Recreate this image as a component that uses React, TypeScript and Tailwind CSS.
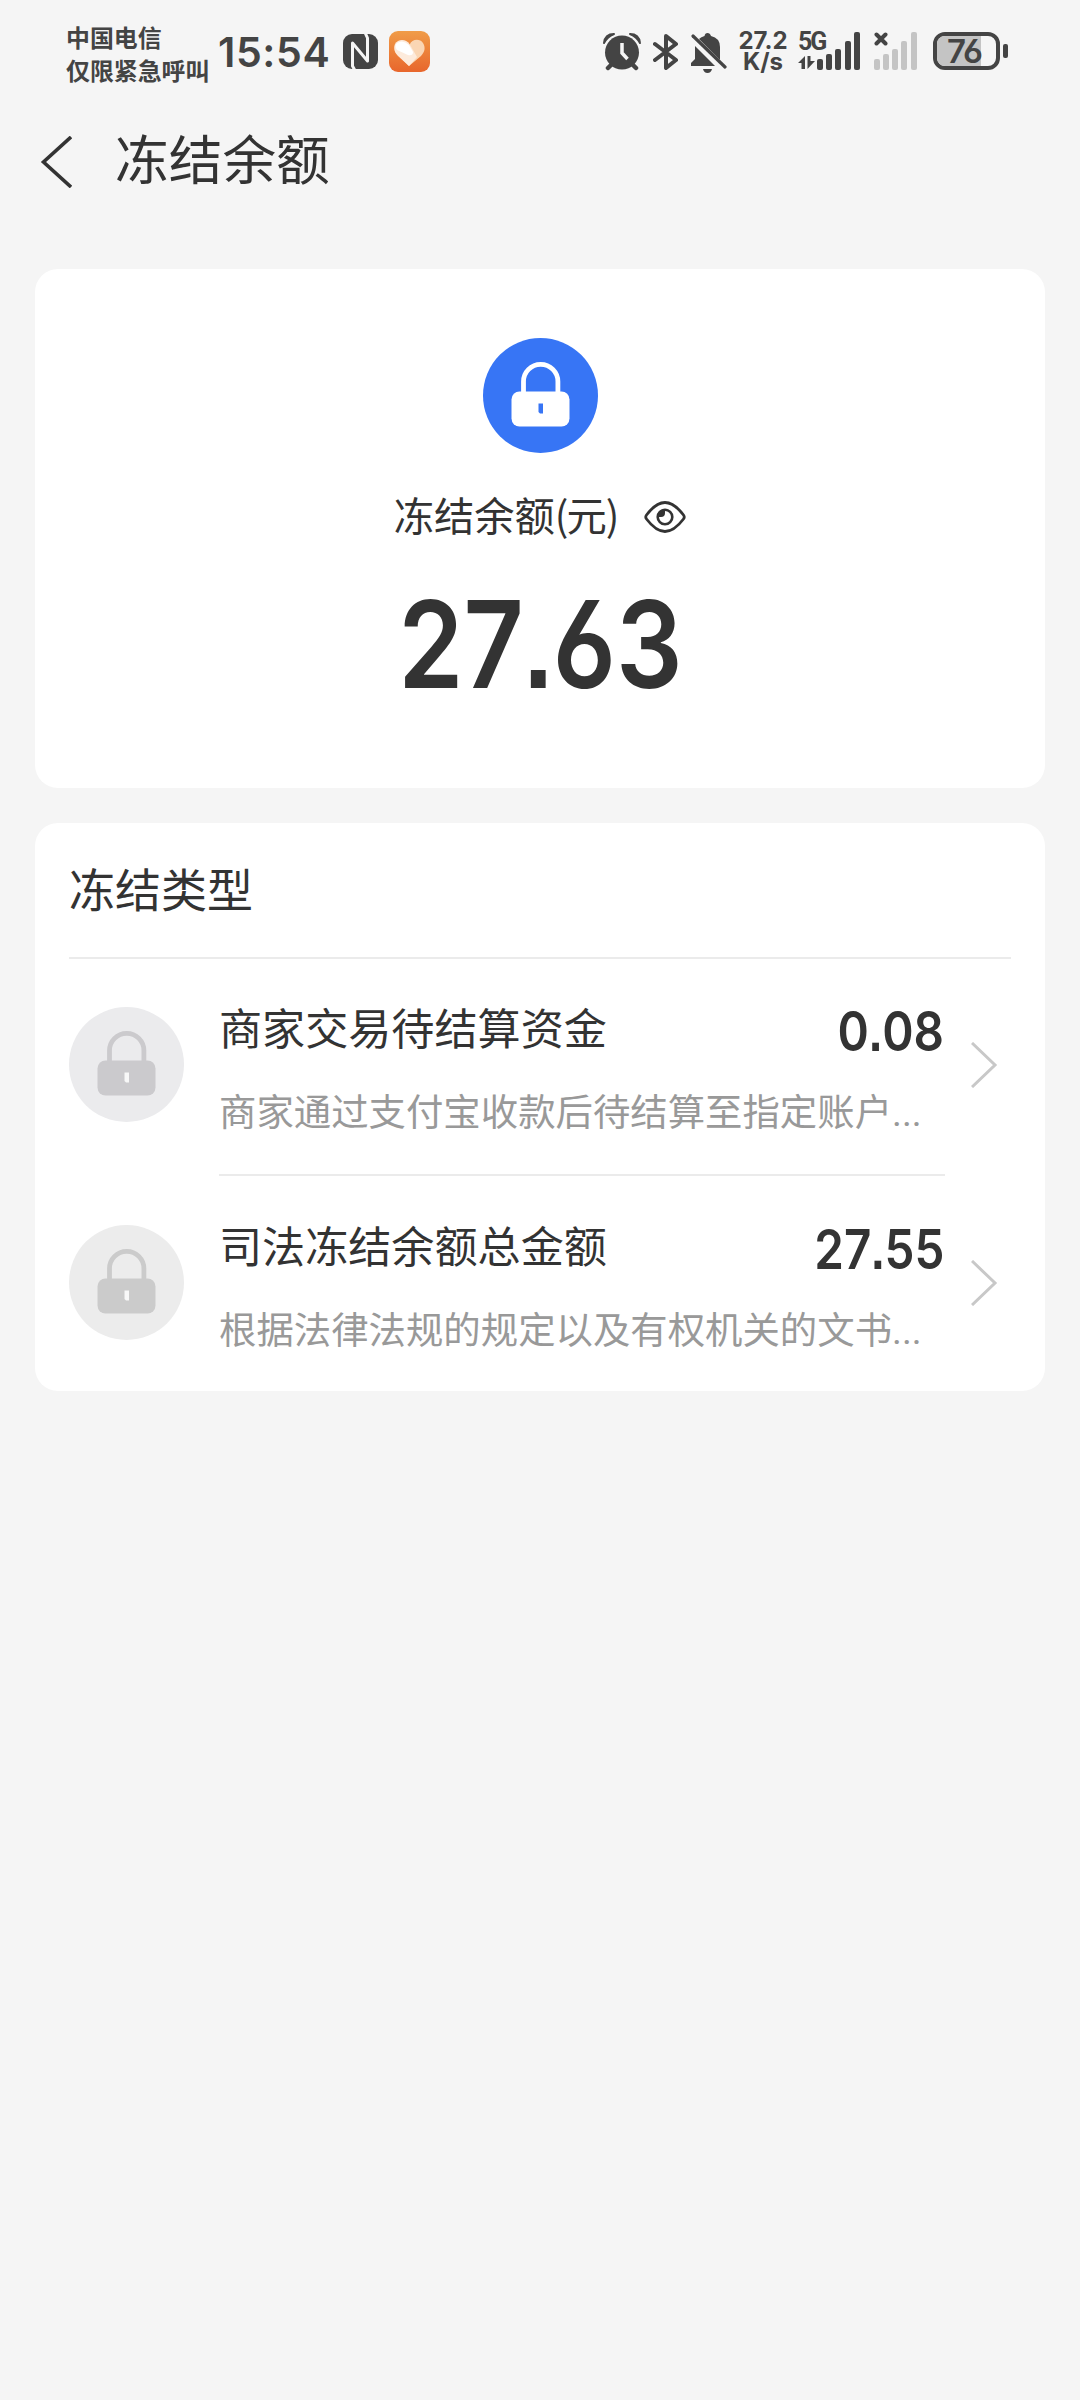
import { clsx } from "clsx";

const BARS = [11, 16, 21, 29, 38];

const Signal = ({ dim }: { dim?: boolean }) => (
  <div className="flex h-[38px] items-end gap-[3.2px]">
    {BARS.map((height) => (
      <span
        className={clsx("w-[6px] rounded-[2px]", dim ? "bg-[#c4c4c4]" : "bg-[#444]")}
        key={height}
        style={{ height }}
      />
    ))}
  </div>
);

const NfcIcon = () => (
  <svg className="h-[35px] w-[35px]" fill="none" viewBox="0 0 35 35">
    <rect fill="#444" height="35" rx="9" width="35" />
    <path d="M12 36.500L9.500 32V9L24.500 27V4L22 -1.500" stroke="#f5f5f5" strokeLinejoin="round" strokeWidth="3" />
  </svg>
);

const HeartIcon = () => (
  <svg className="h-[41px] w-[41px]" viewBox="0 0 41 41">
    <defs>
      <linearGradient id="heart" x1="0" x2="0" y1="0" y2="1">
        <stop offset="0" stopColor="#f09c48" />
        <stop offset="1" stopColor="#e8662c" />
      </linearGradient>
    </defs>
    <rect fill="url(#heart)" height="41" rx="9" width="41" />
    <path d="M20.500 14C23 7.500 31 7.500 34 12C37 17 35.500 21 32 25L20 35L14 29Z" fill="#fad6b4" />
    <path d="M20.500 13C17 7.500 9 7.500 6 13C4 18 6 22 9 25L20 35L28 26Z" fill="#fdebdc" />
    <path d="M8 12Q14 8 20 14L24 21Q24 25 19 24L8 19Q5 15 8 12Z" fill="#fff" />
  </svg>
);

const AlarmIcon = () => (
  <svg className="h-[38px] w-[38px]" fill="none" viewBox="0 0 38 38">
    <path d="M9 31L5 35M29 31L33 35" stroke="#444" strokeLinecap="round" strokeWidth="4.500" />
    <circle cx="19" cy="19.500" fill="#444" r="17" />
    <path d="M1 10Q2 1 11 1Q4 4 1 10ZM37 10Q36 1 27 1Q34 4 37 10Z" fill="#444" stroke="#444" strokeLinejoin="round" strokeWidth="2" />
    <path d="M19 10V20L24.500 26" stroke="#f5f5f5" strokeWidth="3.500" />
  </svg>
);

const BluetoothIcon = () => (
  <svg className="h-[38px] w-[26px]" fill="none" viewBox="0 0 26 38">
    <path d="M2 11L23 27L13 35V3L23 11L2 27" stroke="#444" strokeLinecap="round" strokeLinejoin="round" strokeWidth="4" />
  </svg>
);

const MuteIcon = () => (
  <svg className="h-[40px] w-[36px]" viewBox="0 0 36 40">
    <path d="M12 36H21Q20 40 16.500 40Q13 40 12 36Z" fill="#444" />
    <path d="M4 13L24 33H0V30L4 26Z" fill="#444" />
    <path d="M8 6Q10 4 13.500 3Q14 0 16.500 0Q19 0 20 3Q29 5 29 14V27Z" fill="#444" />
    <path d="M2 3L34 34" stroke="#444" strokeLinecap="round" strokeWidth="3.200" />
  </svg>
);

const StatusBar = () => (
  <div className="flex h-[100px] items-start pl-[66px] text-[#444]">
    <div className="w-[148px] whitespace-nowrap pt-[20px] font-bold text-[23.900px] leading-[33px]">
      <div>中国电信</div>
      <div>仅限紧急呼叫</div>
    </div>
    <div className="mt-[27px] ml-[4px] w-[125px] font-['Inter'] font-semibold text-[41px] leading-[50px] tracking-[0.600px]">
      15:54
    </div>
    <div className="mt-[34px]">
      <NfcIcon />
    </div>
    <div className="mt-[31px] ml-[11px]">
      <HeartIcon />
    </div>
    <div className="mt-[33px] ml-[173px] flex">
      <AlarmIcon />
      <div className="ml-[12px]">
        <BluetoothIcon />
      </div>
      <div className="ml-[12px]">
        <MuteIcon />
      </div>
    </div>
    <div className="mt-[30px] ml-[10px] w-[52px] text-center font-['Inter'] font-bold text-[24px] leading-[21px]">
      <div>27.2</div>
      <div>K/s</div>
    </div>
    <div className="mt-[32px] ml-[9px] w-[19px]">
      <div className="font-['Roboto'] font-bold text-[25px] leading-[19px] tracking-[-2px]">5G</div>
      <svg className="mt-[5px] h-[13px] w-[17px]" viewBox="0 0 17 13">
        <path d="M0 7L7 0V13H3.500V7ZM9.500 0H12.500V5H17L9.500 13Z" fill="#444" />
      </svg>
    </div>
    <div className="mt-[32px]">
      <Signal />
    </div>
    <div className="relative mt-[32px] ml-[14px]">
      <Signal dim />
      <svg className="absolute top-0 left-0 h-[14px] w-[14px]" viewBox="0 0 14 14">
        <path d="M2.500 2.500L11.500 11.500M11.500 2.500L2.500 11.500" stroke="#444" strokeLinecap="round" strokeWidth="4" />
      </svg>
    </div>
    <div className="mt-[32px] ml-[16px] flex items-center gap-[3px]">
      <div className="relative h-[38px] w-[67px] overflow-hidden rounded-[12px] border-4 border-[#444]">
        <div className="h-full w-[44px] bg-[#c4c4c4]" />
        <div className="absolute inset-0 pr-[3px] text-center font-['Inter'] font-semibold text-[33px] leading-[31px] tracking-[-1px] [font-feature-settings:'cv03']">
          76
        </div>
      </div>
      <div className="h-[14px] w-[5px] rounded-[2px] bg-[#444]" />
    </div>
  </div>
);

const Lock = ({ circle, body, hole }: { circle: string; body: string; hole: string }) => (
  <svg className="size-[115px] shrink-0" fill="none" viewBox="0 0 115 115">
    <circle cx="57.500" cy="57.500" fill={circle} r="57.500" />
    <path d="M40.500 56V43.500a17.200 17.200 0 0 1 34.400 0V56" stroke={body} strokeWidth="4.800" />
    <rect fill={body} height="35" rx="8" width="58" x="28.500" y="53.500" />
    <path d="M55.500 65.500H60V75.500H57L55.500 74Z" fill={hole} />
  </svg>
);

const EyeIcon = () => (
  <svg className="mt-[5px] h-[32px] w-[42px]" fill="none" viewBox="0 0 42 32">
    <path
      d="M2.500 14Q12 1.500 21 1.500Q30 1.500 39.500 14Q41 16 39.500 18Q30 30.500 21 30.500Q12 30.500 2.500 18Q1 16 2.500 14Z"
      stroke="#333"
      strokeWidth="2.800"
    />
    <circle cx="21" cy="16" r="7.300" stroke="#333" strokeWidth="2.600" />
    <path d="M21 8V12Q21 16 17 16H13.500Q13.500 9 21 8Z" fill="#333" />
  </svg>
);

// Condensed figures with a square decimal point
const Amount = ({ value, className }: { value: string; className?: string }) => {
  const [whole, cents] = value.split(".");
  return (
    <span
      className={clsx(
        "inline-block scale-x-[0.865] font-['Inter'] font-semibold [font-feature-settings:'cv03']",
        className
      )}
    >
      {whole}
      <span className="font-['Liberation_Sans'] font-bold">.</span>
      {cents}
    </span>
  );
};

const ROWS = [
  {
    title: "商家交易待结算资金",
    amount: "0.08",
    text: "商家通过支付宝收款后待结算至指定账户",
    circle: "#ebebed",
    body: "#cbcacd",
  },
  {
    title: "司法冻结余额总金额",
    amount: "27.55",
    text: "根据法律法规的规定以及有权机关的文书",
    circle: "#ececec",
    body: "#cbcbcb",
  },
];

export default function App() {
  return (
    <div className="h-[2400px] w-[1080px] overflow-hidden bg-[#f5f5f5] font-['Noto_Sans_CJK_SC',sans-serif] text-[#333]">
      <StatusBar />
      <header className="flex h-[169px] items-start pl-[40px]">
        <svg className="mt-[36px] h-[52px] w-[32px]" fill="none" viewBox="0 0 32 52">
          <path d="M31 1L3.500 26L31 51" stroke="#333" strokeWidth="3.600" />
        </svg>
        <h1 className="mt-[17px] ml-[43px] text-[53.700px] leading-[80px]">冻结余额</h1>
      </header>

      <section className="mx-[35px] flex h-[519px] flex-col items-center rounded-[23px] bg-white pt-[69px]">
        <Lock body="#fff" circle="#3775f5" hole="#3775f5" />
        <div className="mt-[31px] flex items-center gap-[27px] text-[40.300px] leading-[60px]">
          <span>
            冻结余额<span className="tracking-[-2px]">(</span>元
            <span className="ml-[-1px] tracking-[-2px]">)</span>
          </span>
          <EyeIcon />
        </div>
        <Amount className="mt-[40px] text-[121px] leading-[120px]" value="27.63" />
      </section>

      <section className="mx-[35px] mt-[35px] h-[568px] rounded-[23px] bg-white">
        <h2 className="mx-[34px] h-[136px] border-[#ebebeb] border-b-2 pt-[31px] text-[46px] leading-[66px]">
          冻结类型
        </h2>
        {ROWS.map((row, i) => (
          <div className="flex h-[218px] pt-[48px] pl-[34px]" key={row.title}>
            <Lock body={row.body} circle={row.circle} hole="#f8f8f8" />
            <div
              className={clsx(
                "-mt-[14px] ml-[35px] h-[183px] w-[726px] whitespace-nowrap",
                i === 0 && "border-[#ebebeb] border-b-2"
              )}
            >
              <div className="flex h-[68px] justify-between">
                <span className="text-[43.100px] leading-[67px]">{row.title}</span>
                <Amount className="mr-[1px] origin-right text-[55px] leading-[76px]" value={row.amount} />
              </div>
              <div className="mt-[21px] text-[#999] text-[37.400px] leading-[56px]">
                {row.text}
                <span className="font-['Roboto']">...</span>
              </div>
            </div>
            <svg className="mt-[35px] ml-[26px] h-[46px] w-[27px]" fill="none" viewBox="0 0 27 46">
              <path d="M1 1L24 23L1 45" stroke="#c8c8c8" strokeWidth="3" />
            </svg>
          </div>
        ))}
      </section>
    </div>
  );
}
